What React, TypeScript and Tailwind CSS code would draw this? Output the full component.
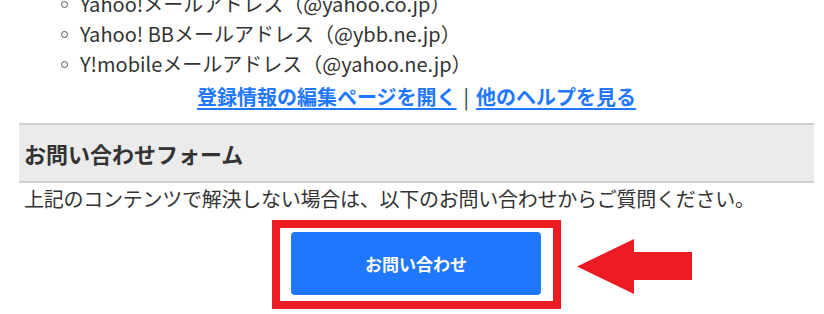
import React from "react";

const font = { fontFamily: '"Noto Sans CJK JP", "Noto Sans", sans-serif' };

export default function App() {
  return (
    <div className="w-[824px] h-[314px] overflow-hidden bg-white text-[#333]" style={font}>
      <div className="ml-[19px] mr-[10px]">
        <ul className="mt-[-11px] pl-[42px] text-[20px] leading-[30px]">
          {[
            "Yahoo!メールアドレス（@yahoo.co.jp）",
            "Yahoo! BBメールアドレス（@ybb.ne.jp）",
            "Y!mobileメールアドレス（@yahoo.ne.jp）",
          ].map((t) => (
            <li key={t} className="flex items-center">
              <span className="w-[7px] h-[7px] rounded-full border border-[#555] mr-[12px] shrink-0" />
              <span>{t}</span>
            </li>
          ))}
        </ul>
        <div className="mt-[3px] flex justify-center text-[20px] leading-[30px] font-bold">
          <a className="text-[#2277ff] underline underline-offset-[3px] decoration-[1.5px]">登録情報の編集ページを開く</a>
          <span className="mx-[7px] font-normal text-[#333]">|</span>
          <a className="text-[#2277ff] underline underline-offset-[3px] decoration-[1.5px]">他のヘルプを見る</a>
        </div>
        <div className="mt-[11px] h-[60px] bg-[#ebebeb] border-y-2 border-[#cfcfcf] flex items-center pl-[5px]">
          <h2 className="text-[22px] font-bold text-[#333]">お問い合わせフォーム</h2>
        </div>
        <p className="mt-[4px] pl-[5px] text-[20px] leading-[24px] tracking-[-0.25px] whitespace-nowrap">
          上記のコンテンツで解決しない場合は、以下のお問い合わせからご質問ください。
        </p>
        <div className="relative mt-[9px] flex justify-center">
          <div className="border-[8px] border-[#ed1c24] pt-[4px] pb-[6px] pl-[11px] pr-[12px]">
            <button className="w-[250px] h-[63px] rounded-[4px] bg-[#1f77ff] text-white text-[17px] font-bold">
              お問い合わせ
            </button>
          </div>
          <svg
            className="absolute left-[558px] top-[19px]"
            width="116"
            height="56"
            viewBox="0 0 116 56"
          >
            <polygon points="0,27.5 57,0 57,13 115,13 115,41 57,41 57,55" fill="#ed1c24" />
          </svg>
        </div>
      </div>
    </div>
  );
}
